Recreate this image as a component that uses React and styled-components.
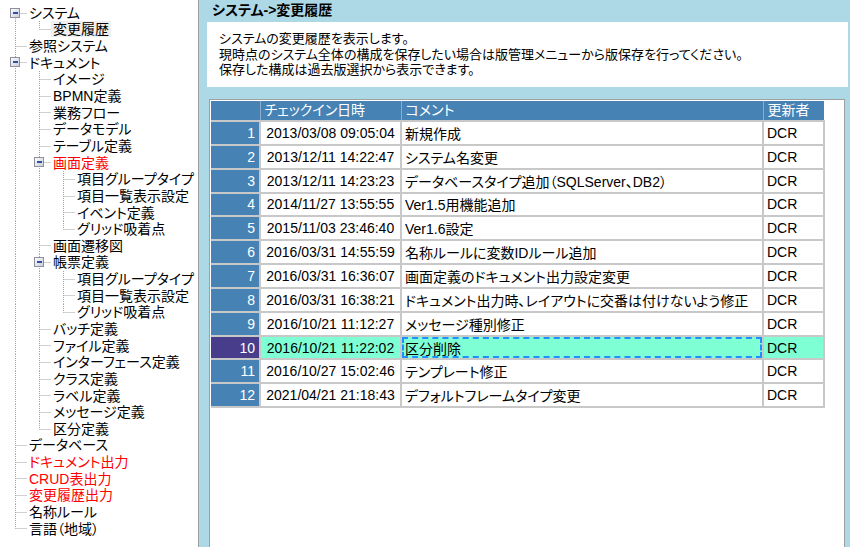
import React from "react";
import styled, { createGlobalStyle } from "styled-components";

const GlobalStyle = createGlobalStyle`
  html, body {
    margin: 0;
    padding: 0;
    height: 100%;
    overflow: hidden;
    background: #fff;
  }
  body {
    font-family: "Liberation Sans", "Noto Sans CJK JP", sans-serif;
    font-feature-settings: "palt";
    color: #000;
  }
  #root {
    height: 100%;
  }
`;

const ROW_H = 16.65;
const INDENT = 24;

const treeData = [
  { label: "システム", open: true, children: [{ label: "変更履歴", selected: true }] },
  { label: "参照システム" },
  {
    label: "ドキュメント",
    open: true,
    children: [
      { label: "イメージ" },
      { label: "BPMN定義" },
      { label: "業務フロー" },
      { label: "データモデル" },
      { label: "テーブル定義" },
      {
        label: "画面定義",
        red: true,
        open: true,
        children: [
          { label: "項目グループタイプ" },
          { label: "項目一覧表示設定" },
          { label: "イベント定義" },
          { label: "グリッド吸着点" },
        ],
      },
      { label: "画面遷移図" },
      {
        label: "帳票定義",
        open: true,
        children: [
          { label: "項目グループタイプ" },
          { label: "項目一覧表示設定" },
          { label: "グリッド吸着点" },
        ],
      },
      { label: "バッチ定義" },
      { label: "ファイル定義" },
      { label: "インターフェース定義" },
      { label: "クラス定義" },
      { label: "ラベル定義" },
      { label: "メッセージ定義" },
      { label: "区分定義" },
    ],
  },
  { label: "データベース" },
  { label: "ドキュメント出力", red: true },
  { label: "CRUD表出力", red: true },
  { label: "変更履歴出力", red: true },
  { label: "名称ルール" },
  { label: "言語（地域）" },
];

const history = [
  ["2013/03/08 09:05:04", "新規作成"],
  ["2013/12/11 14:22:47", "システム名変更"],
  ["2013/12/11 14:23:23", "データベースタイプ追加（SQLServer、DB2）"],
  ["2014/11/27 13:55:55", "Ver1.5用機能追加"],
  ["2015/11/03 23:46:40", "Ver1.6設定"],
  ["2016/03/31 14:55:59", "名称ルールに変数IDルール追加"],
  ["2016/03/31 16:36:07", "画面定義のドキュメント出力設定変更"],
  ["2016/03/31 16:38:21", "ドキュメント出力時、レイアウトに交番は付けないよう修正"],
  ["2016/10/21 11:12:27", "メッセージ種別修正"],
  ["2016/10/21 11:22:02", "区分削除"],
  ["2016/10/27 15:02:46", "テンプレート修正"],
  ["2021/04/21 21:18:43", "デフォルトフレームタイプ変更"],
];
const SELECTED_ROW = 10;

// flatten the tree, remembering which ancestor levels still need a guide line
function flatten(nodes, guides = [], out = [], depth = 0) {
  nodes.forEach((n, i) => {
    const hasNext = i < nodes.length - 1;
    out.push({ ...n, depth, guides, hasNext, firstRoot: depth === 0 && i === 0 });
    if (n.open && n.children) flatten(n.children, [...guides, hasNext], out, depth + 1);
  });
  return out;
}

const Layout = styled.div`
  display: flex;
  height: 100%;
`;

const TreePanel = styled.div`
  width: 195px;
  flex-shrink: 0;
  padding: 4.5px 0 0 3px;
  border-right: 1px solid #a0a0a0;
  background: #fff;
`;

const TreeRow = styled.div`
  display: flex;
  align-items: center;
  height: ${ROW_H}px;
`;

const TreeLabel = styled.span`
  font-size: 14px;
  line-height: 16px;
  padding: 0 2px;
  white-space: nowrap;
  color: ${(p) => (p.$red ? "#ff0000" : "#000")};
  background: ${(p) => (p.$selected ? "#efefef" : "transparent")};
`;

const Main = styled.div`
  flex: 1;
  display: flex;
  flex-direction: column;
  background: #add8e6;
`;

const Title = styled.div`
  height: 22px;
  padding-left: 13px;
  font-size: 14px;
  font-weight: bold;
  line-height: 20px;
`;

const Description = styled.div`
  height: 65px;
  box-sizing: border-box;
  margin: 0 2px 0 8px;
  padding: 9px 0 0 12px;
  background: #fff;
  font-size: 13px;
  line-height: 15.5px;
`;

const GridPanel = styled.div`
  flex: 1;
  margin: 12px 5px 0 10px;
  padding: 1px 0 0 1px;
  background: #fff;
  border: 1px solid #a0a0a0;
  border-bottom: none;
`;

const Table = styled.table`
  border-collapse: collapse;
  table-layout: fixed;
  font-size: 14px;
`;

const HeadCell = styled.th`
  height: 19px;
  padding: 0 0 0 4px;
  background: #4682b4;
  color: #fff;
  font-weight: normal;
  text-align: left;
  line-height: 19px;
  border-left: 1px solid #8aaed0;
  border-bottom: 2px solid #c8c8c8;
  &:first-child {
    border-left: none;
  }
`;

const RowNum = styled.td`
  height: 21.85px;
  padding: 0 4px 0 0;
  text-align: right;
  color: #fff;
  background: ${(p) => (p.$active ? "#483d8b" : "#4682b4")};
  border: 2px solid #c8c8c8;
  border-left: none;
`;

const Cell = styled.td`
  height: 21.85px;
  padding: 0 0 0 ${(p) => (p.$center ? 0 : 3)}px;
  text-align: ${(p) => (p.$center ? "center" : "left")};
  white-space: nowrap;
  overflow: hidden;
  background: ${(p) => (p.$active ? "#7fffd4" : "#fff")};
  border: 2px solid #c8c8c8;
  outline: ${(p) => (p.$focus ? "2px dashed #1e90ff" : "none")};
  outline-offset: -3px;
`;

function Connector({ node }) {
  const w = INDENT * (node.depth + 1);
  const cy = Math.floor(ROW_H / 2) + 0.5;
  const x0 = INDENT * node.depth + 12.5;
  const dot = { stroke: "#a0a0a0", strokeWidth: 1, strokeDasharray: "1 1" };
  return (
    <svg width={w} height={ROW_H} style={{ flexShrink: 0, display: "block" }}>
      {node.guides.map((g, i) =>
        g ? <line key={i} x1={INDENT * i + 12.5} y1={0} x2={INDENT * i + 12.5} y2={ROW_H} {...dot} /> : null
      )}
      <line x1={x0} y1={node.firstRoot ? cy : 0} x2={x0} y2={node.hasNext ? ROW_H : cy} {...dot} />
      <line x1={x0} y1={cy} x2={w} y2={cy} {...dot} />
      {node.open && (
        <g>
          <defs>
            <linearGradient id="exp" x1="0" y1="0" x2="1" y2="1">
              <stop offset="0" stopColor="#ffffff" />
              <stop offset="1" stopColor="#c8cbd8" />
            </linearGradient>
          </defs>
          <rect x={x0 - 5} y={cy - 5} width={9} height={9} fill="url(#exp)" stroke="#8e8f9f" />
          <line x1={x0 - 2.5} y1={cy - 0.5} x2={x0 + 2.5} y2={cy - 0.5} stroke="#2f4fa0" strokeWidth={2} />
        </g>
      )}
    </svg>
  );
}

export default function App() {
  const rows = flatten(treeData);
  return (
    <Layout>
      <GlobalStyle />
      <TreePanel>
        {rows.map((n, i) => (
          <TreeRow key={i}>
            <Connector node={n} />
            <TreeLabel $red={n.red} $selected={n.selected}>
              {n.label}
            </TreeLabel>
          </TreeRow>
        ))}
      </TreePanel>
      <Main>
        <Title>システム-&gt;変更履歴</Title>
        <Description>
          <div>システムの変更履歴を表示します。</div>
          <div>現時点のシステム全体の構成を保存したい場合は版管理メニューから版保存を行ってください。</div>
          <div>保存した構成は過去版選択から表示できます。</div>
        </Description>
        <GridPanel>
          <Table>
            <colgroup>
              <col style={{ width: 49 }} />
              <col style={{ width: 141 }} />
              <col style={{ width: 362 }} />
              <col style={{ width: 61 }} />
            </colgroup>
            <thead>
              <tr>
                <HeadCell />
                <HeadCell>チェックイン日時</HeadCell>
                <HeadCell>コメント</HeadCell>
                <HeadCell>更新者</HeadCell>
              </tr>
            </thead>
            <tbody>
              {history.map(([date, comment], i) => {
                const no = i + 1;
                const active = no === SELECTED_ROW;
                return (
                  <tr key={no}>
                    <RowNum $active={active}>{no}</RowNum>
                    <Cell $center $active={active}>{date}</Cell>
                    <Cell $active={active} $focus={active}>{comment}</Cell>
                    <Cell $active={active}>DCR</Cell>
                  </tr>
                );
              })}
            </tbody>
          </Table>
        </GridPanel>
      </Main>
    </Layout>
  );
}
